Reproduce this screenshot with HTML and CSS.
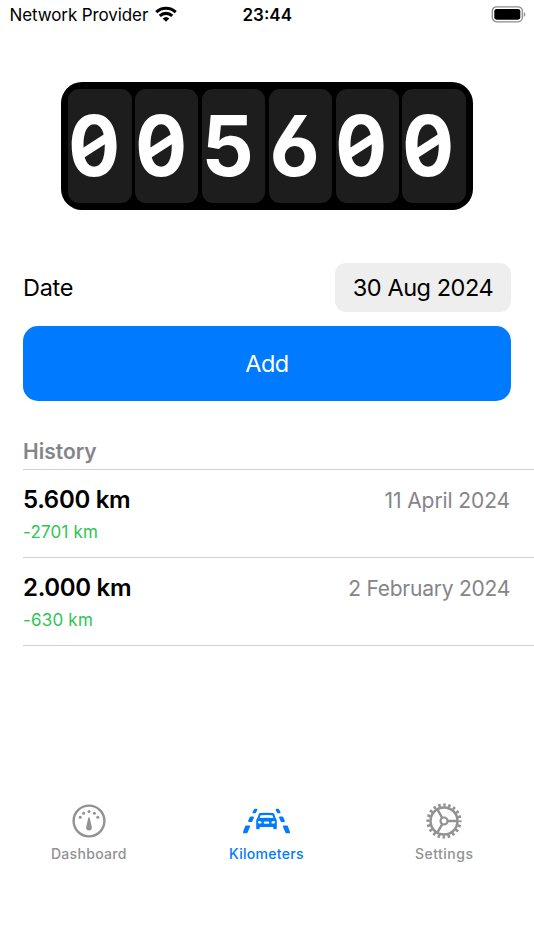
FILE: index.html
```html
<!DOCTYPE html>
<html lang="en">
<head>
<meta charset="utf-8">
<title>Kilometers</title>
<link rel="stylesheet" href="styles.css">
</head>
<body>
<div class="app">
  <header class="status">
    <div class="carrier"><span class="carrier-name">Network Provider</span>
      <svg class="wifi" width="22" height="16" viewBox="0 0 22 16" fill="none" stroke="#000" stroke-width="3.1"><path d="M1.3 6.1a14 14 0 0 1 19.4 0M4.8 9.9a9 9 0 0 1 12.4 0"/><path d="M11 15.8 7.7 12.6a4.8 4.8 0 0 1 6.6 0z" fill="#000" stroke="none"/></svg>
    </div>
    <div class="clock">23:44</div>
    <svg class="battery" width="35" height="17" viewBox="0 0 35 17"><rect x="1.3" y=".8" width="30" height="15" rx="4.2" fill="none" stroke="#8b8b8b" stroke-width="1.3"/><rect x="3.3" y="2.9" width="26" height="10.8" rx="2.4"/><path d="M32.8 6v5q1.5-.8 1.5-2.5T32.8 6z" fill="#8b8b8b"/></svg>
  </header>

  <main>
    <div class="odometer">
      <div class="digit"><span class="zero">0</span></div>
      <div class="digit"><span class="zero">0</span></div>
      <div class="digit"><span>5</span></div>
      <div class="digit"><span>6</span></div>
      <div class="digit"><span class="zero">0</span></div>
      <div class="digit"><span class="zero">0</span></div>
    </div>

    <div class="date-row">
      <span class="date-label">Date</span>
      <button class="date-value">30 Aug 2024</button>
    </div>
    <button class="add">Add</button>

    <h2 class="history-title">History</h2>
    <ul class="history">
      <li class="entry">
        <div class="entry-main"><strong>5.600 km</strong><span class="entry-date">11 April 2024</span></div>
        <div class="delta">-2701 km</div>
      </li>
      <li class="entry">
        <div class="entry-main"><strong>2.000 km</strong><span class="entry-date entry-date-long">2 February 2024</span></div>
        <div class="delta">-630 km</div>
      </li>
    </ul>
  </main>

  <nav class="tabs">
    <a class="tab">
      <svg width="34" height="34" viewBox="0 0 34 34"><circle cx="17" cy="17" r="15.4" fill="none" stroke="currentColor" stroke-width="2.4"/><g fill="currentColor"><circle cx="8.2" cy="13.3" r="1.5"/><circle cx="11.6" cy="9.3" r="1.5"/><circle cx="17" cy="7.6" r="1.5"/><circle cx="22.4" cy="9.3" r="1.5"/><circle cx="25.8" cy="13.3" r="1.5"/><path d="M16.3 13.8q.7-1 1.4 0l2.2 9.8a2.9 2.9 0 1 1-5.8 0z"/></g></svg>
      <span>Dashboard</span>
    </a>
    <a class="tab tab-active">
      <svg width="48" height="34" viewBox="0 0 48 34" fill="currentColor"><path stroke="currentColor" stroke-width="1.9" stroke-linejoin="round" d="M12.9 5.8h1.5l-1.4 2.6h-1.6zM8.7 13.4h2.3l-1.6 3.6H7.1zM4.1 22.4h3.1l-2.6 5.9H1.9zM36.1 5.8h-1.5l1.4 2.6h1.6zM40.3 13.4h-2.3l1.6 3.6h2.3zM44.9 22.4h-3.1l2.6 5.9h2.7z"/><path transform="translate(.5)" fill-rule="evenodd" d="M16.2 10.3q.5-1.1 1.6-1.2 6.2-.6 12.4 0 1.1.1 1.6 1.2l1.5 4.1q1 .9 1 2.6v7q0 1.2-1.1 1.2h-1.3q-1.1 0-1.1-1.2v-1.1H17.2V24q0 1.2-1.1 1.2h-1.3q-1.1 0-1.1-1.2v-7q0-1.7 1-2.6zm1.9 1-1 2.6q6.9-.5 13.8 0l-1-2.6q-5.9-.5-11.8 0zM16.8 17a1.3 1.3 0 0 0 0 2.6h1.6q.8 0 .8-.8-.2-1.5-2.4-1.8zm14.4 0a1.3 1.3 0 0 1 0 2.6h-1.6q-.8 0-.8-.8.2-1.5 2.4-1.8zM22.2 17.6q-1 0-1 1.1t1 1.1h3.6q1 0 1-1.1t-1-1.1z"/></svg>
      <span>Kilometers</span>
    </a>
    <a class="tab">
      <svg width="36" height="36" viewBox="-18 -18 36 36" fill="none" stroke="currentColor"><circle r="13.5" stroke-width="2.5"/><circle r="16" stroke-width="3.2" stroke-dasharray="2.5 2.526" stroke-dashoffset="1.25"/><circle r="3.5" stroke-width="2.2"/><path d="M3.8 0H13M-1.9-3.3-6.5-11.3M-1.9 3.3-6.5 11.3" stroke-width="2.4"/></svg>
      <span class="settings-label">Settings</span>
    </a>
  </nav>
</div>
</body>
</html>
```
FILE: styles.css
```css
* { box-sizing: border-box; }
body {
  margin: 0;
  background: #fff;
  color: #000;
  font-family: Inter, "Liberation Sans", sans-serif;
}
.app {
  width: 534px;
  height: 950px;
  display: flex;
  flex-direction: column;
  overflow: hidden;
}
.status {
  height: 30px;
  padding: 0 8px 0 9.5px;
  display: grid;
  grid-template-columns: 1fr 50px 1fr;
  align-items: center;
}
.carrier { display: flex; align-items: center; gap: 6.5px; font-size: 17px; white-space: nowrap; }
.carrier-name { letter-spacing: -.1px; }
.wifi { margin-top: -2px; }
.clock { margin-left: -1px; font-size: 17px; font-weight: 600; text-align: center; white-space: nowrap; }
.battery { justify-self: end; margin-top: -1px; }

main { display: flex; flex-direction: column; }
.odometer {
  width: 412px;
  height: 128px;
  margin: 52px auto 0;
  padding: 7px;
  display: flex;
  gap: 3.3px;
  border-radius: 21px;
  background: #000;
}
.digit {
  flex: 1;
  min-width: 0;
  display: flex;
  align-items: center;
  justify-content: center;
  padding-right: 12px;
  border-radius: 11px;
  background: #1d1d1d;
  color: #fff;
  font-size: 83.5px;
  font-weight: 700;
  line-height: 1;
  font-feature-settings: "cv03" 1;
}
.digit span { position: relative; transform: scaleX(.98); }
.digit .zero { transform: scaleX(.92); }
/* short diagonal bar inside the zero's counter */
.zero::after {
  content: "";
  position: absolute;
  left: 50%;
  top: 50%;
  width: 30px;
  height: 9px;
  background: #fff;
  transform: translate(-50%, -50%) rotate(-31deg);
}
.date-row {
  height: 49px;
  margin: 53px 23px 0;
  display: flex;
  align-items: center;
  justify-content: space-between;
  font-size: 23.5px;
  letter-spacing: -.3px;
}
button { border: 0; padding: 0; font: inherit; color: inherit; letter-spacing: inherit; }
.date-value {
  width: 176px;
  height: 49px;
  border-radius: 11px;
  background: #eee;
  letter-spacing: -.45px;
}
.add {
  height: 75px;
  margin: 14px 23px 0;
  border-radius: 15px;
  background: #007aff;
  color: #fff;
  font-size: 23.5px;
  letter-spacing: -.5px;
}
.history-title {
  height: 69px;
  margin: 0 0 0 23px;
  padding-top: 38px;
  border-bottom: 1px solid #d0d0d2;
  color: #858589;
  font-size: 21px;
  font-weight: 600;
  line-height: 26px;
}
.history { list-style: none; margin: 0 0 0 23px; padding: 0; }
.entry {
  height: 88px;
  padding: 15px 24px 0 0;
  border-bottom: 1px solid #d0d0d2;
}
.entry-main { display: flex; justify-content: space-between; align-items: baseline; line-height: 30px; }
.entry-main strong { font-size: 24px; font-weight: 600; letter-spacing: -.32px; }
.entry-date { font-size: 21px; color: #858589; letter-spacing: -.1px; }
.entry-date-long { letter-spacing: -.25px; }
.delta { margin-top: 5px; font-size: 17px; line-height: 22px; color: #30c552; letter-spacing: .2px; }

.tabs { width: 533px; margin-top: 157px; display: grid; grid-template-columns: repeat(3, 1fr); }
.tab {
  display: flex;
  flex-direction: column;
  align-items: center;
  color: #929292;
  font-size: 14px;
  font-weight: 500;
  line-height: 18px;
  letter-spacing: .3px;
}
.tab svg { height: 36px; margin-bottom: 6px; }
.tab-active { color: #007aff; }
.settings-label { letter-spacing: .5px; }
```
